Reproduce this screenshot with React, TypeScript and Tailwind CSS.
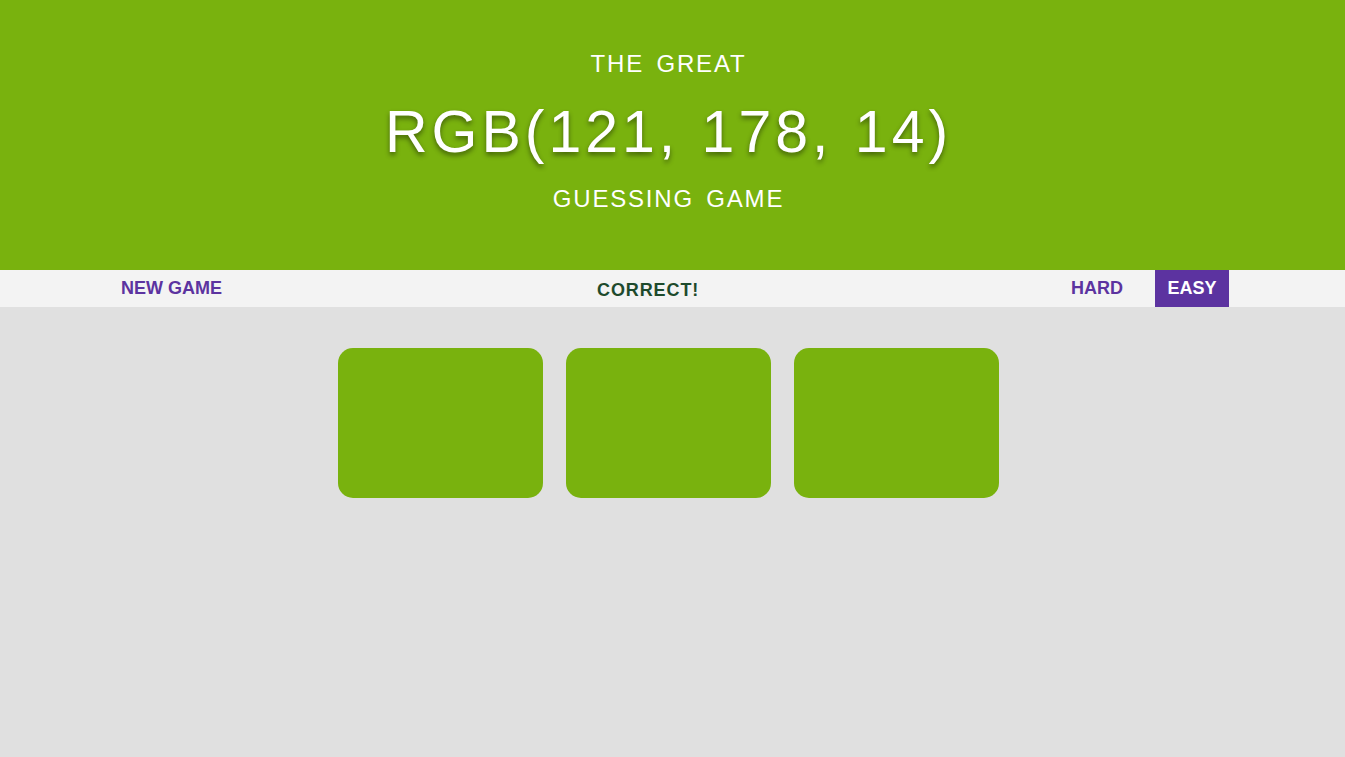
const tiles = [0, 1, 2];

export default function App() {
  return (
    <div className="min-h-[757px] bg-[#e0e0e0] font-['Liberation_Sans',Arial,sans-serif]">
      {/* header */}
      <header className="h-[270px] bg-[#79b20e] text-white">
        <div className="w-[1337px] flex flex-col items-center pt-[52px]">
          <div className="text-[24px] leading-none tracking-[1.8px] [word-spacing:4px]">THE GREAT</div>
          <div className="mt-[27px] text-[59px] leading-none tracking-[4px] [word-spacing:2px] [text-shadow:0_3px_5px_rgba(0,0,0,0.45)]">
            RGB(121, 178, 14)
          </div>
          <div className="mt-[25px] text-[24px] leading-none tracking-[1.8px] [word-spacing:4px]">GUESSING GAME</div>
        </div>
      </header>

      {/* controls */}
      <nav className="h-[37px] bg-[#f3f3f3] flex items-stretch pr-[116px] text-[18px] font-bold leading-none">
        <button className="ml-[109px] px-[12px] pb-[2px] text-[#5c33a0] flex items-center">NEW GAME</button>
        <span className="ml-[363px] pt-[3px] flex items-center text-[#1d4a2c] tracking-[0.05em]">CORRECT!</span>
        <button className="ml-auto px-[12px] pb-[2px] text-[#5c33a0] flex items-center">HARD</button>
        <button className="ml-[20px] px-[12.5px] pb-[2px] bg-[#5c33a0] text-white flex items-center">EASY</button>
      </nav>

      {/* tiles */}
      <main className="flex gap-[23px] pl-[338px] pt-[41px]">
        {tiles.map((t) => (
          <div key={t} className="w-[205px] h-[150px] rounded-[15px] bg-[#79b20e]" />
        ))}
      </main>
    </div>
  );
}
